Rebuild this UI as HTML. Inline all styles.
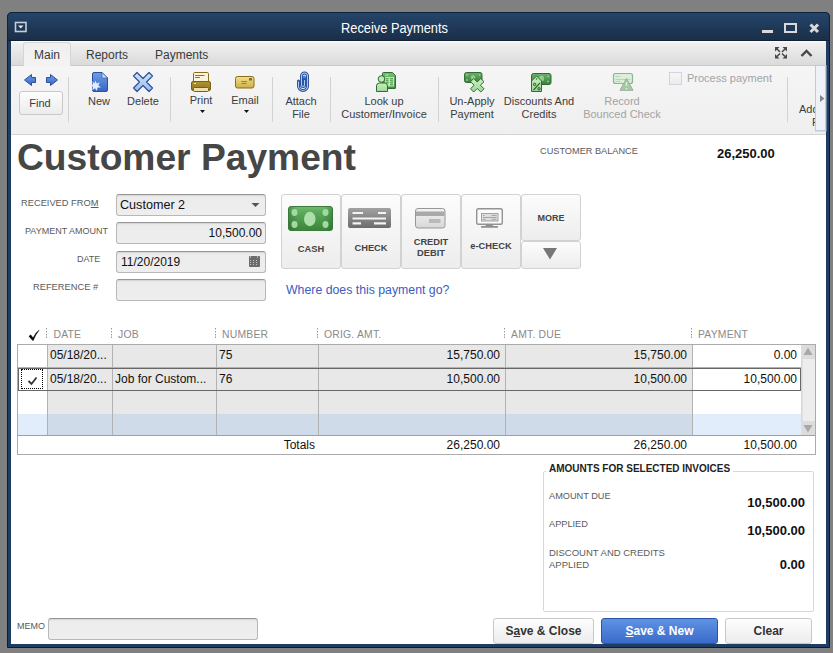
<!DOCTYPE html>
<html><head><meta charset="utf-8">
<style>
*{box-sizing:border-box;margin:0;padding:0}
html,body{width:833px;height:653px;overflow:hidden;background:#808080;font-family:"Liberation Sans",sans-serif;color:#333}
.a{position:absolute}
svg{position:absolute;overflow:visible}
.t{position:absolute;white-space:nowrap;line-height:1}
#win{left:7px;top:12px;width:823px;height:636px;background:#1f3d62;border:1px solid #0e1c2e;border-radius:5px 5px 0 0}
#title{left:7px;top:12px;width:823px;height:29px;border-radius:5px 5px 0 0;border:1px solid #10223a;border-bottom-color:#0f2238;background:linear-gradient(#24456b,#1b2e47)}
#content{left:11px;top:41px;width:815px;height:603px;background:#fff}
#tabs{left:11px;top:41px;width:815px;height:25px;background:linear-gradient(#fdfdfd,#f0f0f0 2px,#dadada);border-bottom:1px solid #b9cde3}
#toolbar{left:11px;top:66px;width:815px;height:69px;background:linear-gradient(#f5f5f5,#efefef);border-bottom:1px solid #d4d4d4}
.sep{position:absolute;width:1px;background:#d2d2d2;top:77px;height:45px}
.tl{font-size:11px;color:#3c3c3c;text-align:center;line-height:13px;width:100px}
.lbl{font-size:9.3px;color:#5a5a5a}
.inp{position:absolute;border:1px solid #b8b8b8;border-top-color:#969696;border-radius:3px;background:linear-gradient(#e4e4e4,#ececec 3px,#eeeeee);box-shadow:inset 0 1px 0 rgba(0,0,0,.06)}
.pm{position:absolute;top:194px;width:60px;height:75px;border:1px solid #d2d2d2;border-radius:3px;background:linear-gradient(#fcfcfc,#ededed)}
.pml{font-size:9.3px;font-weight:bold;color:#444;width:60px;text-align:center}
.hd{font-size:10.4px;color:#8a8a8a;letter-spacing:0.2px}
.cell{font-size:12px;color:#111}
.r{text-align:right}
.btn{position:absolute;top:618px;height:26px;border:1px solid #c8c8c8;border-radius:3px;background:linear-gradient(#fefefe,#ececec);font-size:12px;font-weight:bold;color:#333;text-align:center;line-height:24px}
</style></head><body>
<div id="win" class="a"></div>
<div id="title" class="a"></div>
<div id="content" class="a"></div>
<div id="tabs" class="a"></div>
<div id="toolbar" class="a"></div>

<!-- title bar -->
<svg style="left:0;top:0" width="833" height="41">
  <rect x="15.5" y="22.5" width="10.5" height="9" fill="#1d3859" stroke="#c9ced6" stroke-width="1.6"/>
  <path d="M18,25.5 L23.5,25.5 L20.75,28.5 Z" fill="#e8e8e8"/>
  <rect x="762" y="30" width="11" height="3" fill="#d9d9d9"/>
  <rect x="785" y="24" width="11" height="8" fill="none" stroke="#d9d9d9" stroke-width="2"/>
  <path d="M810.5,24.5 L818,32 M818,24.5 L810.5,32" stroke="#d9d9d9" stroke-width="3"/>
</svg>
<div class="t" style="left:340.8px;top:22px;font-size:13.8px;color:#fff;transform:scaleX(0.93);transform-origin:0 0">Receive Payments</div>

<!-- tabs -->
<div class="a" style="left:23px;top:42px;width:48px;height:24px;background:linear-gradient(#efefef,#f3f3f3);border:1px solid #d6d6d6;border-bottom:none;border-radius:3px 3px 0 0"></div>
<div class="t" style="left:34px;top:49px;font-size:12px;color:#3a3a3a">Main</div>
<div class="t" style="left:86px;top:49px;font-size:12px;color:#3a3a3a">Reports</div>
<div class="t" style="left:155px;top:49px;font-size:12px;color:#3a3a3a">Payments</div>
<svg style="left:0;top:0" width="833" height="66">
  <g stroke="#474747" stroke-width="1.5" fill="none">
    <path d="M777,49 L780,52 M785,49 L782,52 M777,56.5 L780,53.5 M785,56.5 L782,53.5"/>
  </g>
  <g fill="#474747">
    <path d="M775,47 h4.5 l-4.5,4.5 z M787,47 h-4.5 l4.5,4.5 z M775,58.5 h4.5 l-4.5,-4.5 z M787,58.5 h-4.5 l4.5,-4.5 z"/>
  </g>
  <path d="M801.5,56 L806.5,51 L811.5,56" stroke="#474747" stroke-width="2.4" fill="none"/>
</svg>

<!-- toolbar separators -->
<div class="sep" style="left:68px"></div>
<div class="sep" style="left:170px"></div>
<div class="sep" style="left:272px"></div>
<div class="sep" style="left:330px"></div>
<div class="sep" style="left:438px"></div>
<div class="sep" style="left:787px"></div>

<!-- toolbar icons -->
<svg style="left:0;top:0" width="833" height="134">
  <defs>
    <linearGradient id="gblue" x1="0" y1="0" x2="0" y2="1"><stop offset="0" stop-color="#6e9ee8"/><stop offset="1" stop-color="#3765c4"/></linearGradient>
    <linearGradient id="glblue" x1="0" y1="0" x2="0" y2="1"><stop offset="0" stop-color="#cfe2fb"/><stop offset="1" stop-color="#98bcef"/></linearGradient>
    <linearGradient id="ggold" x1="0" y1="0" x2="0" y2="1"><stop offset="0" stop-color="#b39433"/><stop offset="1" stop-color="#8e721f"/></linearGradient>
    <linearGradient id="gmail" x1="0" y1="0" x2="0" y2="1"><stop offset="0" stop-color="#f2e08f"/><stop offset="1" stop-color="#cfae45"/></linearGradient>
    <linearGradient id="ggreen" x1="0" y1="0" x2="0" y2="1"><stop offset="0" stop-color="#72c072"/><stop offset="1" stop-color="#3f8e3f"/></linearGradient>
    <linearGradient id="gbill" x1="0" y1="0" x2="0" y2="1"><stop offset="0" stop-color="#6aaf6a"/><stop offset="1" stop-color="#3c7f3c"/></linearGradient>
    <linearGradient id="glgreen" x1="0" y1="0" x2="0" y2="1"><stop offset="0" stop-color="#c8f0c0"/><stop offset="1" stop-color="#9fd69a"/></linearGradient>
  </defs>
  <!-- arrows -->
  <path d="M24.5,80 L31.5,74.5 L31.5,77.5 L35.5,77.5 L35.5,82.5 L31.5,82.5 L31.5,85.5 Z" fill="url(#gblue)" stroke="#2b4f9c" stroke-width="1" stroke-linejoin="round"/>
  <path d="M57.5,80 L50.5,74.5 L50.5,77.5 L46.5,77.5 L46.5,82.5 L50.5,82.5 L50.5,85.5 Z" fill="url(#gblue)" stroke="#2b4f9c" stroke-width="1" stroke-linejoin="round"/>
  <!-- new -->
  <path d="M92.5,74 Q92.5,72.5 94,72.5 L102,72.5 L107.5,78 L107.5,90 Q107.5,91.5 106,91.5 L94,91.5 Q92.5,91.5 92.5,90 Z" fill="url(#gblue)" stroke="#2b4f9c" stroke-width="1"/>
  <path d="M102,72.5 L102,77 Q102,78 103,78 L107.5,78 Z" fill="#c9ddfa" stroke="#2b4f9c" stroke-width="0.6"/>
  <path d="M95.5,80.5 L96.8,83.6 L99.8,82.3 L98.3,85.3 L101,87.5 L97.6,87.6 L96.8,91 L95,88.3 L92.3,90.2 L92.8,86.8 L89.8,85.2 L93,84.3 L92.2,81.2 L94.6,83.3 Z" fill="#e2eefd"/>
  <!-- delete -->
  <path d="M133.5,76 L137,72.5 L143,78.5 L149,72.5 L152.5,76 L146.5,82 L152.5,88 L149,91.5 L143,85.5 L137,91.5 L133.5,88 L139.5,82 Z" fill="url(#glblue)" stroke="#2d4f99" stroke-width="1.2" stroke-linejoin="round"/>
  <!-- print -->
  <rect x="193.5" y="72.5" width="15" height="10" rx="1.2" fill="#faf3da" stroke="#8a6d1c" stroke-width="1"/>
  <path d="M195.5,75.5 h8.5 M195.5,77.5 h4" stroke="#8f7424" stroke-width="1" stroke-linecap="round"/>
  <rect x="191.5" y="81.5" width="19" height="9" rx="1.5" fill="url(#ggold)" stroke="#7a5f16" stroke-width="1"/>
  <path d="M194,83.5 h2" stroke="#efe2b0" stroke-width="1"/>
  <rect x="193.5" y="87.5" width="15" height="4" rx="1" fill="#efe0ad" stroke="#7a5f16" stroke-width="1"/>
  <!-- email -->
  <rect x="235.5" y="76.5" width="18.5" height="11.5" rx="2" fill="url(#gmail)" stroke="#8a6d1c" stroke-width="1"/>
  <rect x="249" y="78" width="3" height="2.5" fill="#8a6d1c"/>
  <path d="M241.5,81.5 h5.5 M241.5,83.5 h5" stroke="#8a6d1c" stroke-width="0.8"/>
  <!-- dropdown triangles -->
  <path d="M200,110 L205,110 L202.5,113 Z" fill="#111"/>
  <path d="M244,110 L249,110 L246.5,113 Z" fill="#111"/>
  <!-- attach -->
  <path d="M298.5,81 L298.5,86 A4.5,4.5 0 0 0 307.5,86 L307.5,76 A3,3 0 0 0 301.5,76 L301.5,85 A1.5,1.5 0 0 0 304.5,85 L304.5,78" fill="none" stroke="#2b4f9c" stroke-width="3" stroke-linecap="round"/>
  <path d="M298.5,81.5 L298.5,86 A4.5,4.5 0 0 0 307.5,86 L307.5,76 A3,3 0 0 0 301.5,76 L301.5,85 A1.5,1.5 0 0 0 304.5,85 L304.5,80" fill="none" stroke="#a9c8f2" stroke-width="1.1"/>
  <circle cx="304.3" cy="77" r="1.5" fill="#4f82d8"/>
  <!-- look up -->
  <path d="M382.5,73.5 Q382.5,72.5 383.5,72.5 L392.5,72.5 L395.5,75.5 L395.5,88 Q395.5,88.5 395,88.5 L383,88.5 Q382.5,88.5 382.5,88 Z" fill="url(#ggreen)" stroke="#2f6c2f" stroke-width="1"/>
  <rect x="385" y="77" width="9" height="9.5" fill="#bfe6b8"/>
  <path d="M385.8,78.8 h2.8 M390,78.8 h3 M385.8,80.8 h2.8 M390,80.8 h3 M385.8,82.8 h2.8 M390,82.8 h3 M390,84.8 h3" stroke="#3f8a3f" stroke-width="1"/>
  <path d="M385.5,75 h3" stroke="#c3ecbc" stroke-width="1"/>
  <ellipse cx="381.5" cy="79" rx="3.3" ry="3.3" fill="#bfe9b6" stroke="#2f6c2f" stroke-width="1"/>
  <path d="M376.5,91.5 L376.5,86 Q376.5,83 379.5,83 L384.5,83 Q387.5,83 387.5,86 L387.5,91.5 Z" fill="url(#glgreen)" stroke="#2f6c2f" stroke-width="1"/>
  <!-- un-apply -->
  <rect x="464.5" y="72.5" width="17.5" height="10" rx="2" fill="url(#gbill)" stroke="#2f6c2f" stroke-width="1"/>
  <ellipse cx="473" cy="77.5" rx="2.2" ry="2.5" fill="#8fc98f"/><circle cx="467" cy="75" r="0.9" fill="#8fc98f"/><circle cx="467" cy="80" r="0.9" fill="#8fc98f"/><circle cx="479.5" cy="75" r="0.9" fill="#8fc98f"/>
  <path d="M473.7,78.5 L477.2,82.0 L480.8,78.5 L484.0,81.7 L480.4,85.2 L484.0,88.8 L480.8,92.0 L477.2,88.5 L473.7,92.0 L470.5,88.8 L474.1,85.2 L470.5,81.7 Z" fill="url(#glgreen)" stroke="#2f6c2f" stroke-width="1" stroke-linejoin="round"/>
  <!-- discounts -->
  <rect x="531.5" y="73.5" width="19.5" height="11" rx="2" fill="url(#gbill)" stroke="#2f6c2f" stroke-width="1"/>
  <ellipse cx="541.5" cy="78.5" rx="2.6" ry="3" fill="#8fc98f"/><circle cx="548" cy="76.5" r="0.9" fill="#8fc98f"/><circle cx="548" cy="81.5" r="0.9" fill="#8fc98f"/>
  <path d="M531.5,91.5 L531.5,81 L536.5,76 L541.5,81 L541.5,91.5 Z" fill="url(#glgreen)" stroke="#2f6c2f" stroke-width="1" stroke-linejoin="round"/>
  <path d="M533.5,90.2 L540,82.8" stroke="#24522a" stroke-width="1.1"/>
  <circle cx="534.6" cy="84.4" r="1.2" fill="none" stroke="#24522a" stroke-width="1"/>
  <circle cx="539" cy="88.8" r="1.2" fill="none" stroke="#24522a" stroke-width="1"/>
  <circle cx="536.5" cy="79" r="0.8" fill="#2f6c2f"/>
  <!-- record bounced -->
  <rect x="613.5" y="73.5" width="19" height="10" rx="2" fill="#d9efd6" stroke="#93b291" stroke-width="1.2"/>
  <path d="M615.5,76.5 h4 M615.5,79.5 h15 M615.5,81.5 h5" stroke="#b0ccae" stroke-width="0.8"/>
  <path d="M626.5,78.5 L633,90.3 L620,90.3 Z" fill="#a9c8a6" stroke="#93b291" stroke-width="1" stroke-linejoin="round"/>
  <path d="M626.5,82 v4 M626.5,88 v1.5" stroke="#d8eed5" stroke-width="1.4"/>
  <!-- right scroll panel -->
  <rect x="815.5" y="65.5" width="10.5" height="65.5" fill="#eef2f8" stroke="#bccbdd" stroke-width="1"/>
</svg>

<!-- toolbar labels -->
<div class="a" style="left:19px;top:91px;width:44px;height:24px;border:1px solid #c8c8c8;border-radius:3px;background:linear-gradient(#fdfdfd,#ececec)"></div>
<div class="t tl" style="left:-10px;top:97px">Find</div>
<div class="t tl" style="left:49px;top:95px">New</div>
<div class="t tl" style="left:93px;top:95px">Delete</div>
<div class="t tl" style="left:151px;top:94px">Print</div>
<div class="t tl" style="left:195px;top:94px">Email</div>
<div class="t tl" style="left:251px;top:95px">Attach<br>File</div>
<div class="t tl" style="left:334px;top:95px">Look up<br>Customer/Invoice</div>
<div class="t tl" style="left:422px;top:95px">Un-Apply<br>Payment</div>
<div class="t tl" style="left:489px;top:95px">Discounts And<br>Credits</div>
<div class="t tl" style="left:572px;top:95px;color:#a3a3a3">Record<br>Bounced Check</div>
<div class="a" style="left:669px;top:72px;width:13px;height:13px;border:1px solid #ccd6e2;background:linear-gradient(#f6f6f6,#ececec)"></div>
<div class="t" style="left:687px;top:73px;font-size:11px;color:#a3a3a3">Process payment</div>
<div class="a" style="left:797px;top:95px;width:18px;height:36px;overflow:hidden">
  <div class="t tl" style="left:0;top:8px;width:auto;text-align:left"><span style="margin-left:2px">Add</span><br><span style="margin-left:15px">Pa</span></div>
</div>
<div class="a" style="left:815px;top:65px;width:11px;height:66px;background:#eef2f8;border:1px solid #bccbdd"></div>
<svg style="left:0;top:0" width="833" height="134"><path d="M820,95 L824.5,98.5 L820,102 Z" fill="#858585"/></svg>

<!-- form title -->
<div class="t" style="left:17px;top:139.4px;font-size:37.2px;font-weight:bold;color:#464646">Customer Payment</div>
<div class="t lbl" style="left:540px;top:147px;font-size:9.2px">CUSTOMER BALANCE</div>
<div class="t" style="left:717px;top:147px;font-size:13px;font-weight:bold;color:#111">26,250.00</div>

<!-- labels & inputs -->
<div class="t lbl" style="left:21px;top:199px">RECEIVED FRO<u>M</u></div>
<div class="t lbl" style="left:25px;top:227px;font-size:9px">PAYMENT AMOUNT</div>
<div class="t lbl" style="left:77px;top:255px;font-size:9px">DATE</div>
<div class="t lbl" style="left:33px;top:283px">REFERENCE #</div>
<div class="inp" style="left:116px;top:194px;width:150px;height:22px"></div>
<div class="inp" style="left:116px;top:222px;width:150px;height:22px"></div>
<div class="inp" style="left:116px;top:251px;width:150px;height:22px"></div>
<div class="inp" style="left:116px;top:279px;width:150px;height:22px"></div>
<div class="t" style="left:120px;top:199px;font-size:12.6px;color:#111">Customer 2</div>
<div class="t r" style="left:160px;width:102px;top:227px;font-size:12px;color:#111">10,500.00</div>
<div class="t" style="left:121px;top:256px;font-size:12px;color:#111">11/20/2019</div>
<svg style="left:0;top:0" width="833" height="320">
  <path d="M251.5,203 L259.5,203 L255.5,207 Z" fill="#555"/>
  <rect x="249" y="256" width="11" height="11" rx="0.8" fill="#6c6c6c"/>
  <rect x="250" y="256" width="1" height="2" fill="#b0b0b0"/><rect x="257" y="256" width="1" height="2" fill="#b0b0b0"/>
  <rect x="250" y="260" width="1" height="1" fill="#c0c0c0"/><rect x="250" y="262" width="1" height="1" fill="#c0c0c0"/><rect x="250" y="264" width="1" height="1" fill="#c0c0c0"/><rect x="253" y="260" width="1" height="1" fill="#c0c0c0"/><rect x="253" y="262" width="1" height="1" fill="#c0c0c0"/><rect x="253" y="264" width="1" height="1" fill="#c0c0c0"/><rect x="256" y="260" width="1" height="1" fill="#c0c0c0"/><rect x="256" y="262" width="1" height="1" fill="#c0c0c0"/><rect x="256" y="264" width="1" height="1" fill="#c0c0c0"/>
</svg>

<!-- payment methods -->
<div class="pm" style="left:281px"></div>
<div class="pm" style="left:341px"></div>
<div class="pm" style="left:401px"></div>
<div class="pm" style="left:461px"></div>
<div class="pm" style="left:521px;height:47px"></div>
<div class="pm" style="left:521px;top:241px;height:28px"></div>
<svg style="left:0;top:0" width="833" height="300">
  <defs>
    <linearGradient id="gcash" x1="0" y1="0" x2="0" y2="1"><stop offset="0" stop-color="#6fba6f"/><stop offset="0.25" stop-color="#5aa85a"/><stop offset="1" stop-color="#3b843b"/></linearGradient>
    <linearGradient id="gcashh" x1="0" y1="0" x2="1" y2="0"><stop offset="0" stop-color="#1f5a1f" stop-opacity=".35"/><stop offset=".2" stop-color="#1f5a1f" stop-opacity="0"/><stop offset=".8" stop-color="#1f5a1f" stop-opacity="0"/><stop offset="1" stop-color="#1f5a1f" stop-opacity=".35"/></linearGradient>
    <linearGradient id="gchk" x1="0" y1="0" x2="0" y2="1"><stop offset="0" stop-color="#a2a2a2"/><stop offset="1" stop-color="#6c6c6c"/></linearGradient>
    <linearGradient id="gcc" x1="0" y1="0" x2="0" y2="1"><stop offset="0" stop-color="#f2f2f2"/><stop offset="1" stop-color="#d8d8d8"/></linearGradient>
  </defs>
  <rect x="288.5" y="206.5" width="44" height="24" rx="2.5" fill="url(#gcash)" stroke="#3d7d3d" stroke-width="1"/>
  <rect x="288.5" y="206.5" width="44" height="24" rx="2.5" fill="url(#gcashh)"/>
  <ellipse cx="309.8" cy="219" rx="5.8" ry="7.2" fill="#acdfac"/>
  <ellipse cx="294.5" cy="212.5" rx="3" ry="3.4" fill="#a2d8a2"/>
  <ellipse cx="294.5" cy="224.5" rx="3" ry="3.4" fill="#a2d8a2"/>
  <ellipse cx="325.5" cy="212.5" rx="3" ry="3.4" fill="#a2d8a2"/>
  <ellipse cx="325.5" cy="224.5" rx="3" ry="3.4" fill="#a2d8a2"/>
  <rect x="348" y="208" width="43" height="20" rx="2" fill="url(#gchk)"/>
  <path d="M352.5,213 h10.5 M378,213 h8 M352.5,218.5 h33.5 M352.5,223.3 h8.5 M374,223.3 h12" stroke="#f4f4f4" stroke-width="2.2"/>
  <rect x="415.5" y="208.5" width="29.5" height="19.5" rx="2.5" fill="url(#gcc)" stroke="#979797" stroke-width="1"/>
  <rect x="416" y="211.5" width="28.5" height="4.5" fill="#a9a9a9"/>
  <rect x="429" y="219" width="11.5" height="4" fill="#b9b9b9"/>
  <rect x="476.7" y="208.7" width="25.6" height="15.6" rx="1.8" fill="#fbfbfb" stroke="#939393" stroke-width="1.4"/>
  <rect x="481.5" y="213.5" width="16.5" height="7.5" fill="#dedede" stroke="#a2a2a2" stroke-width="1"/>
  <path d="M483,215.5 h1.5 M491.5,215.5 h5 M483,217.5 h13.5 M483,219.3 h2.5 M491.5,219.3 h5" stroke="#a0a0a0" stroke-width="0.9"/>
  <path d="M486,224.5 L492.5,224.5 L493,226.3 L485.5,226.3 Z" fill="#8f8f8f"/>
  <rect x="481" y="226" width="17" height="1.8" rx="0.6" fill="#8f8f8f"/>
  <path d="M543,248 L557,248 L550,259.5 Z" fill="#777"/>
</svg>
<div class="t pml" style="left:281px;top:245px">CASH</div>
<div class="t pml" style="left:341px;top:244px">CHECK</div>
<div class="t pml" style="left:401px;top:237px;line-height:11.4px">CREDIT<br>DEBIT</div>
<div class="t pml" style="left:461px;top:242px">e-CHECK</div>
<div class="t pml" style="left:521px;top:214px;font-size:9px">MORE</div>
<div class="t" style="left:286px;top:284px;font-size:12.3px;color:#3d5cc0">Where does this payment go?</div>

<!-- table header -->
<svg style="left:0;top:0" width="833" height="350">
  <path d="M28.6,336.2 L30.8,334.6 L33,337.6 Q35.6,332.2 39.2,329.8 L39.4,330.3 Q35.8,334.4 33.4,340.8 L32.6,340.8 Z" fill="#111"/>
  <g fill="#9a9a9a">
    <rect x="46" y="328" width="1" height="1.5"/><rect x="46" y="331" width="1" height="1.5"/><rect x="46" y="334" width="1" height="1.5"/><rect x="46" y="336.5" width="1" height="1.5"/>
    <rect x="111" y="328" width="1" height="1.5"/><rect x="111" y="331" width="1" height="1.5"/><rect x="111" y="334" width="1" height="1.5"/><rect x="111" y="336.5" width="1" height="1.5"/>
    <rect x="215" y="328" width="1" height="1.5"/><rect x="215" y="331" width="1" height="1.5"/><rect x="215" y="334" width="1" height="1.5"/><rect x="215" y="336.5" width="1" height="1.5"/>
    <rect x="317" y="328" width="1" height="1.5"/><rect x="317" y="331" width="1" height="1.5"/><rect x="317" y="334" width="1" height="1.5"/><rect x="317" y="336.5" width="1" height="1.5"/>
    <rect x="504" y="328" width="1" height="1.5"/><rect x="504" y="331" width="1" height="1.5"/><rect x="504" y="334" width="1" height="1.5"/><rect x="504" y="336.5" width="1" height="1.5"/>
    <rect x="691" y="328" width="1" height="1.5"/><rect x="691" y="331" width="1" height="1.5"/><rect x="691" y="334" width="1" height="1.5"/><rect x="691" y="336.5" width="1" height="1.5"/>
  </g>
</svg>
<div class="t hd" style="left:53.5px;top:330px">DATE</div>
<div class="t hd" style="left:118px;top:330px">JOB</div>
<div class="t hd" style="left:222px;top:330px">NUMBER</div>
<div class="t hd" style="left:324px;top:330px">ORIG. AMT.</div>
<div class="t hd" style="left:511px;top:330px">AMT. DUE</div>
<div class="t hd" style="left:698px;top:330px">PAYMENT</div>

<!-- table body -->
<div class="a" style="left:17px;top:344px;width:799px;height:111px;border:1px solid #ababab;background:#fff"></div>
<div class="a" style="left:48px;top:345px;width:644px;height:69px;background:#e8e8e8"></div>
<div class="a" style="left:18px;top:414px;width:30px;height:21px;background:#e2edfb"></div>
<div class="a" style="left:48px;top:414px;width:644px;height:21px;background:#cfdbe8"></div>
<div class="a" style="left:692px;top:414px;width:109px;height:21px;background:#e2edfb"></div>
<svg style="left:0;top:0" width="833" height="460">
  <g stroke="#b2b2b2" stroke-width="1">
    <path d="M47.5,345 V435 M112.5,345 V435 M216.5,345 V435 M318.5,345 V435 M505.5,345 V435 M692.5,345 V435"/>
    <path d="M18,367.5 H801 M18,390.5 H801"/>
  </g>
  <path d="M18,435.5 H815" stroke="#a0a0a0" stroke-width="1"/>
  <rect x="18.5" y="368.5" width="782" height="22" fill="none" stroke="#676767" stroke-width="1"/>
  
  <path d="M28.5,381 L31.5,384 L36.5,377.5" stroke="#333" stroke-width="1.8" fill="none"/>
  <!-- scrollbar -->
  <rect x="801" y="345" width="14" height="90" fill="#ededed"/>
  <rect x="801" y="359" width="1.5" height="62" fill="#d6d6d6"/>
  <rect x="801" y="345" width="14" height="14" fill="#dcdcdc"/>
  <rect x="801" y="421" width="14" height="14" fill="#dcdcdc"/>
  <path d="M803.5,355 L812.5,355 L808,347.5 Z" fill="#a8a8a8"/>
  <path d="M803.5,425 L812.5,425 L808,432.5 Z" fill="#a8a8a8"/>
</svg>
<div class="a" style="left:21px;top:369px;width:22px;height:20px;border:1px dotted #000"></div>
<div class="t cell" style="left:50px;top:349px">05/18/20...</div>
<div class="t cell" style="left:219px;top:349px">75</div>
<div class="t cell r" style="left:399px;width:101px;top:349px">15,750.00</div>
<div class="t cell r" style="left:586px;width:101px;top:349px">15,750.00</div>
<div class="t cell r" style="left:696px;width:101px;top:349px">0.00</div>
<div class="t cell" style="left:50px;top:373px">05/18/20...</div>
<div class="t cell" style="left:115px;top:373px">Job for Custom...</div>
<div class="t cell" style="left:219px;top:373px">76</div>
<div class="t cell r" style="left:399px;width:101px;top:373px">10,500.00</div>
<div class="t cell r" style="left:586px;width:101px;top:373px">10,500.00</div>
<div class="t cell r" style="left:696px;width:101px;top:373px">10,500.00</div>
<div class="t cell r" style="left:214px;width:101px;top:439px">Totals</div>
<div class="t cell r" style="left:399px;width:101px;top:439px">26,250.00</div>
<div class="t cell r" style="left:586px;width:101px;top:439px">26,250.00</div>
<div class="t cell r" style="left:696px;width:101px;top:439px">10,500.00</div>

<!-- memo & summary -->
<div class="t lbl" style="left:17px;top:622px;font-size:9px">MEMO</div>
<div class="inp" style="left:48px;top:618px;width:210px;height:22px"></div>

<div class="a" style="left:543px;top:471px;width:271px;height:141px;border:1px solid #d8d8d8;border-radius:2px"></div>
<div class="t" style="left:546px;top:464px;padding:0 3px;background:#fff;font-size:10px;font-weight:bold;color:#222">AMOUNTS FOR SELECTED INVOICES</div>
<div class="t lbl" style="left:549px;top:492px;font-size:9.2px">AMOUNT DUE</div>
<div class="t lbl" style="left:549px;top:520px;font-size:9.2px">APPLIED</div>
<div class="t lbl" style="left:549px;top:547px;line-height:12px;font-size:9.5px">DISCOUNT AND CREDITS<br>APPLIED</div>
<div class="t r" style="left:700px;width:105px;top:496px;font-size:13px;font-weight:bold;color:#111">10,500.00</div>
<div class="t r" style="left:700px;width:105px;top:524px;font-size:13px;font-weight:bold;color:#111">10,500.00</div>
<div class="t r" style="left:700px;width:105px;top:558px;font-size:13px;font-weight:bold;color:#111">0.00</div>

<div class="btn" style="left:493px;width:101px">S<u>a</u>ve &amp; Close</div>
<div class="btn" style="left:601px;width:117px;border-color:#2c54a6;background:linear-gradient(#5f93e3,#3a6bcb);color:#fff"><u>S</u>ave &amp; New</div>
<div class="btn" style="left:725px;width:87px">Clear</div>

</body></html>
